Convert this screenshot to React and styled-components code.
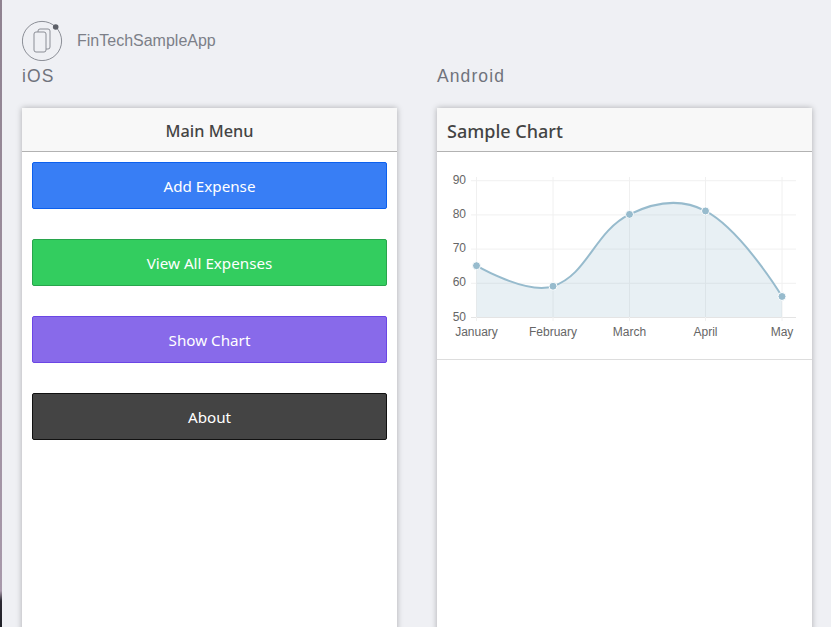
import React from 'react';
import styled, { createGlobalStyle } from 'styled-components';

const GlobalStyle = createGlobalStyle`
  html, body {
    margin: 0;
    padding: 0;
    background: #eff0f4;
  }
  * { box-sizing: border-box; }
`;

const Page = styled.div`
  height: 627px;
  overflow: hidden;
  padding: 20px 0 0 20px;
  border-left: 2px solid;
  border-image: linear-gradient(#8f8290 0, #a899ab 590px, #2c2a33 600px, #1f2027 627px) 1;
  background: #eff0f4;
  font-family: "Liberation Sans", Arial, sans-serif;
`;

const Brand = styled.header`
  display: flex;
  align-items: center;
  gap: 14px;
  height: 41px;
`;

const BrandName = styled.span`
  font-size: 16px;
  color: #7c7f88;
`;

const Columns = styled.div`
  display: grid;
  grid-template-columns: 375px 375px;
  column-gap: 40px;
`;

const Column = styled.section`
  display: flex;
  flex-direction: column;
`;

const Platform = styled.h2`
  margin: 5px 0 0;
  height: 42px;
  font-size: 17.5px;
  line-height: 21px;
  font-weight: 400;
  letter-spacing: 1.1px;
  color: #70737c;
`;

const Card = styled.div`
  height: 600px;
  background: #fff;
  box-shadow: 0 0 6px rgba(0, 0, 0, 0.28);
`;

const CardHeader = styled.div`
  height: 44px;
  padding: 2px 10px 0;
  display: flex;
  align-items: center;
  justify-content: ${p => (p.$center ? 'center' : 'flex-start')};
  background: #f8f8f8;
  border-bottom: 1px solid #b2b2b2;
  font-family: "Noto Sans", sans-serif;
  font-size: ${p => (p.$center ? '16.3px' : '18px')};
  font-weight: 500;
  color: #444;
`;

const Menu = styled.div`
  display: flex;
  flex-direction: column;
  gap: 30px;
  padding: 10px;
`;

const tones = {
  blue: ['#387ef5', '#0c60ee'],
  green: ['#33cd5f', '#28a54c'],
  purple: ['#886aea', '#6b46e5'],
  dark: ['#444444', '#111111'],
};

const MenuButton = styled.button`
  height: 47px;
  width: 100%;
  padding: 0;
  border: 1px solid ${p => tones[p.$tone][1]};
  border-radius: 2px;
  background: ${p => tones[p.$tone][0]};
  color: #fff;
  font-family: "Noto Sans", sans-serif;
  font-size: 15.2px;
`;

const ChartBox = styled.div`
  height: 208px;
  border-bottom: 1px solid #ddd;
`;

const ChartSvg = styled.svg`
  display: block;
`;

const TickText = styled.text`
  font-family: "Liberation Sans", Arial, sans-serif;
  font-size: 12px;
  fill: #666;
`;

const months = ['January', 'February', 'March', 'April', 'May'];
const values = [65, 59, 80, 81, 56];
const xs = [39.5, 116, 192.5, 268.5, 345];
const yOf = v => 165 - (v - 50) * 3.42;
const points = values.map((v, i) => ({ x: xs[i], y: yOf(v) }));

// same spline as chart.js, tension .4
const linePath = () => {
  const t = 0.4;
  const ctrl = points.map((p, i) => {
    const a = points[i - 1];
    const b = points[i + 1];
    if (!a || !b) return { prev: p, next: p };
    const d01 = Math.hypot(p.x - a.x, p.y - a.y);
    const d12 = Math.hypot(b.x - p.x, b.y - p.y);
    const fa = (t * d01) / (d01 + d12);
    const fb = (t * d12) / (d01 + d12);
    return {
      prev: { x: p.x - fa * (b.x - a.x), y: p.y - fa * (b.y - a.y) },
      next: { x: p.x + fb * (b.x - a.x), y: p.y + fb * (b.y - a.y) },
    };
  });
  let d = `M${points[0].x} ${points[0].y}`;
  for (let i = 1; i < points.length; i++) {
    const c1 = ctrl[i - 1].next;
    const c2 = ctrl[i].prev;
    d += ` C${c1.x} ${c1.y} ${c2.x} ${c2.y} ${points[i].x} ${points[i].y}`;
  }
  return d;
};

const Logo = () => (
  <svg width="41" height="41" viewBox="0 0 41 41" fill="none">
    <circle cx="20" cy="21" r="19.6" stroke="#8b8e96" strokeWidth="1" />
    <rect x="12" y="12" width="12" height="20" rx="2" stroke="#8b8e96" />
    <path d="M16 12V11a2 2 0 0 1 2-2h8a2 2 0 0 1 2 2v16a2 2 0 0 1-2 2H24" stroke="#8b8e96" />
    <circle cx="33.7" cy="7" r="2.8" fill="#5d6068" />
  </svg>
);

const SalesChart = () => {
  const line = linePath();
  const grid = '#f0f0f0';
  return (
    <ChartSvg width="375" height="207" viewBox="0 0 375 207">
      {[90, 80, 70, 60].map(v => (
        <line key={v} x1="34" x2="359" y1={yOf(v) + 0.5} y2={yOf(v) + 0.5} stroke={grid} />
      ))}
      <line x1="34" x2="359" y1="165.5" y2="165.5" stroke="#e4e4e4" />
      {xs.map(x => (
        <line key={x} x1={x} x2={x} y1="25" y2="169" stroke={grid} />
      ))}
      <path d={`${line} L345 165 L39.5 165 Z`} fill="rgba(151,187,205,0.22)" />
      <path d={line} fill="none" stroke="#97bbcd" strokeWidth="2" />
      {points.map(p => (
        <circle key={p.x} cx={p.x} cy={p.y} r="4" fill="#97bbcd" stroke="#fff" strokeWidth="1" />
      ))}
      {[90, 80, 70, 60, 50].map(v => (
        <TickText key={v} x="29" y={yOf(v) + 3.5} textAnchor="end">{v}</TickText>
      ))}
      {months.map((m, i) => (
        <TickText key={m} x={xs[i]} y="184" textAnchor="middle">{m}</TickText>
      ))}
    </ChartSvg>
  );
};

export default function App() {
  return (
    <>
      <GlobalStyle />
      <Page>
        <Brand>
          <Logo />
          <BrandName>FinTechSampleApp</BrandName>
        </Brand>
        <Columns>
          <Column>
            <Platform>iOS</Platform>
            <Card>
              <CardHeader $center>Main Menu</CardHeader>
              <Menu>
                <MenuButton $tone="blue">Add Expense</MenuButton>
                <MenuButton $tone="green">View All Expenses</MenuButton>
                <MenuButton $tone="purple">Show Chart</MenuButton>
                <MenuButton $tone="dark">About</MenuButton>
              </Menu>
            </Card>
          </Column>
          <Column>
            <Platform>Android</Platform>
            <Card>
              <CardHeader>Sample Chart</CardHeader>
              <ChartBox>
                <SalesChart />
              </ChartBox>
            </Card>
          </Column>
        </Columns>
      </Page>
    </>
  );
}
